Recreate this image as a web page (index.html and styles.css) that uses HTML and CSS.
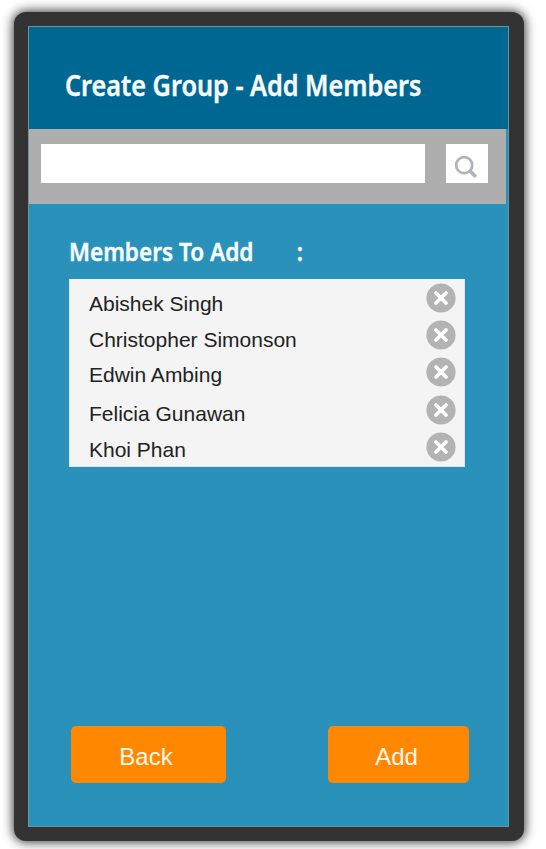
FILE: index.html
```html
<!DOCTYPE html>
<html lang="en">
<head>
<meta charset="utf-8">
<title>Create Group - Add Members</title>
<link rel="stylesheet" href="styles.css">
</head>
<body>
<svg class="defs" width="0" height="0" aria-hidden="true">
  <symbol id="remove" viewBox="0 0 30 30">
    <circle cx="15" cy="15" r="14.6" fill="#b3b3b3"/>
    <path d="M10 10L20 20M20 10L10 20" stroke="#fff" stroke-width="3.8" stroke-linecap="round"/>
  </symbol>
</svg>
<div class="device">
  <main class="screen">
    <header class="header"><h1 class="title">Create Group - Add Members</h1></header>
    <form class="search">
      <input class="search-input" type="text" aria-label="Search members">
      <button class="search-button" type="button" aria-label="Search">
        <svg width="24" height="24" viewBox="0 0 24 24" fill="none" stroke="#b0b3b7">
          <circle cx="10.2" cy="10.2" r="8" stroke-width="2.7"/>
          <path d="M16.2 16.2L20.8 20.8" stroke-width="3.7" stroke-linecap="round"/>
        </svg>
      </button>
    </form>
    <section class="members">
      <h2 class="label"><span>Members To Add</span><span>:</span></h2>
      <ul class="list">
        <li class="row"><span class="name drop-5">Abishek Singh</span><svg class="remove"><use href="#remove"/></svg></li>
        <li class="row"><span class="name drop-4">Christopher Simonson</span><svg class="remove"><use href="#remove"/></svg></li>
        <li class="row"><span class="name drop-2">Edwin Ambing</span><svg class="remove"><use href="#remove"/></svg></li>
        <li class="row"><span class="name drop-3">Felicia Gunawan</span><svg class="remove"><use href="#remove"/></svg></li>
        <li class="row"><span class="name drop-1">Khoi Phan</span><svg class="remove"><use href="#remove"/></svg></li>
      </ul>
    </section>
    <footer class="actions">
      <button class="action back" type="button">Back</button>
      <button class="action add" type="button">Add</button>
    </footer>
  </main>
</div>
</body>
</html>
```
FILE: styles.css
```css
* { box-sizing: border-box; }
body { height: 849px; margin: 0; padding: 12px 0 0 14px; background: #fff; font-family: "Liberation Sans", Arial, sans-serif; overflow: hidden; }
.defs { display: block; width: 0; height: 0; }
.device {
  width: 510px;
  height: 829px;
  padding: 14px 15px 14px 14px;
  border-radius: 12px;
  background: #333;
  box-shadow: 0 0 11px 1px rgba(0, 0, 0, .8);
}
.screen {
  display: flex;
  flex-direction: column;
  height: 801px;
  border: 1px solid #6b929f;
  background: #2a92ba;
}
.header { height: 102px; padding: 38px 0 0 36px; background: #006692; }
.title, .label { margin: 0; color: #f8fdff; font-family: "Noto Sans", "Open Sans", sans-serif; font-weight: 600; white-space: nowrap; transform-origin: 0 50%; -webkit-text-stroke: .4px #f8fdff; }
.title { font-size: 28px; line-height: 40px; transform: scaleX(.901); }
.search { display: flex; gap: 21px; width: 477px; height: 75px; padding: 15px 0 0 12px; background: #aeaeae; }
.search-input { width: 384px; height: 39px; padding: 0 8px; border: 0; background: #fff; font-size: 20px; }
.search-button { display: flex; width: 42px; height: 39px; padding: 11px 0 0 8px; border: 0; background: #fff; }
.members { padding: 30px 0 0 40px; }
.label { display: flex; gap: 48px; height: 45px; font-size: 25px; line-height: 35px; transform: scaleX(.903); }
.list { width: 396px; margin: 0; padding: 0; list-style: none; background: #f4f4f4; border: 1px solid #d9e5ea; border-top: 0; }
.row { display: flex; justify-content: space-between; height: 37.4px; padding: 3.5px 8px 0 19px; }
.name { color: #222; font-size: 21px; line-height: 32px; }
.remove { width: 30px; height: 30px; }
.drop-1 { padding-top: 2px; }
.drop-2 { padding-top: 2px; }
.drop-3 { padding-top: 3px; }
.drop-4 { padding-top: 4px; }
.drop-5 { padding-top: 5px; }
.actions { display: flex; justify-content: space-between; margin-top: auto; padding: 0 39px 43px 42px; }
.action { height: 57px; padding: 5px 0 0; border: 0; border-radius: 5px; background: #ff8800; color: #fff9ef; font-family: inherit; font-size: 24px; }
.back { width: 155px; padding-right: 5px; }
.add { width: 141px; padding-right: 4px; }
```
